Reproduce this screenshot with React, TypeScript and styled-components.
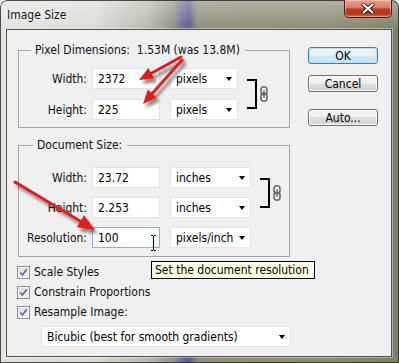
import React from 'react'
import styled, { createGlobalStyle } from 'styled-components'

const GlobalStyle = createGlobalStyle`
  html, body {
    margin: 0;
    padding: 0;
    background: #fff;
  }
  body {
    font-family: "DejaVu Sans Condensed", "DejaVu Sans", sans-serif;
    font-stretch: condensed;
    font-size: 12px;
    color: #000;
  }
`

type Arrow = { x1: number; y1: number; x2: number; y2: number; len: number; w: number }

const arrows: Arrow[] = [
    { x1: 181, y1: 57, x2: 139, y2: 80, len: 14, w: 12 },
    { x1: 182, y1: 60, x2: 143, y2: 104, len: 14, w: 12 },
    { x1: 15, y1: 182, x2: 95, y2: 230, len: 17, w: 14 },
]

const arrowParts = (a: Arrow) => {
    const dx = a.x2 - a.x1
    const dy = a.y2 - a.y1
    const d = Math.hypot(dx, dy)
    const ux = dx / d
    const uy = dy / d
    const bx = a.x2 - ux * a.len
    const by = a.y2 - uy * a.len
    const px = -uy * a.w / 2
    const py = ux * a.w / 2
    return {
        base: { x: bx + ux * 2, y: by + uy * 2 },
        head: `${a.x2},${a.y2} ${bx + px},${by + py} ${bx - px},${by - py}`,
    }
}

const App = () => {
    return (
        <>
            <GlobalStyle />
            <Window>
                <TitleBar>
                    <Title>Image Size</Title>
                    <CloseButton>
                        <svg width="14" height="11" viewBox="0 0 14 11">
                            <path d="M2.5 1.5 L11.5 9.5 M11.5 1.5 L2.5 9.5" stroke="#3a1a14" strokeWidth="4" strokeLinecap="round" />
                            <path d="M2.5 1.5 L11.5 9.5 M11.5 1.5 L2.5 9.5" stroke="#fff" strokeWidth="2.2" strokeLinecap="round" />
                        </svg>
                    </CloseButton>
                </TitleBar>
                <Client>
                    <LeftColumn>
                        <GroupBox $pt={11} $pb={7}>
                            <Legend $indent={12}>Pixel Dimensions:&nbsp; 1.53M (was 13.8M)</Legend>
                            <LinkedGroup>
                                <Rows $gap={10}>
                                    <Row>
                                        <FieldLabel>Width:</FieldLabel>
                                        <TextBox>2372</TextBox>
                                        <Dropdown $w={68}>pixels<Caret /></Dropdown>
                                    </Row>
                                    <Row>
                                        <FieldLabel>Height:</FieldLabel>
                                        <TextBox>225</TextBox>
                                        <Dropdown $w={68}>pixels<Caret /></Dropdown>
                                    </Row>
                                </Rows>
                                <Bracket />
                                <ChainIcon />
                            </LinkedGroup>
                        </GroupBox>

                        <DocGroup $pt={15} $pb={8}>
                            <Legend $indent={14}>Document Size:</Legend>
                            <LinkedGroup>
                                <Rows $gap={9}>
                                    <Row>
                                        <FieldLabel>Width:</FieldLabel>
                                        <TextBox>23.72</TextBox>
                                        <Dropdown $w={81}>inches<Caret /></Dropdown>
                                    </Row>
                                    <Row>
                                        <FieldLabel>Height:</FieldLabel>
                                        <TextBox>2.253</TextBox>
                                        <Dropdown $w={81}>inches<Caret /></Dropdown>
                                    </Row>
                                </Rows>
                                <Bracket />
                                <ChainIcon />
                            </LinkedGroup>
                            <ResolutionRow>
                                <FieldLabel>Resolution:</FieldLabel>
                                <TextBox $focused>
                                    100
                                    <IBeam width="5" height="16" viewBox="0 0 5 16">
                                        <path d="M0 0.5 H2 M3 0.5 H5 M2.5 1 V15 M0 15.5 H2 M3 15.5 H5" stroke="#000" strokeWidth="1" />
                                    </IBeam>
                                    <Tooltip>Set the document resolution</Tooltip>
                                </TextBox>
                                <Dropdown $w={81}>pixels/inch<Caret /></Dropdown>
                            </ResolutionRow>
                        </DocGroup>

                        <Options>
                            {['Scale Styles', 'Constrain Proportions', 'Resample Image:'].map((label) => (
                                <CheckRow key={label}>
                                    <CheckBox>
                                        <svg width="9" height="9" viewBox="0 0 9 9">
                                            <path d="M1.2 4.6 L3.4 7 L7.8 1.4" stroke="#5b6c96" strokeWidth="1.7" fill="none" />
                                        </svg>
                                    </CheckBox>
                                    {label}
                                </CheckRow>
                            ))}
                        </Options>
                        <MethodDropdown $w={250}>Bicubic (best for smooth gradients)<Caret /></MethodDropdown>
                    </LeftColumn>

                    <RightColumn>
                        <PushButton $default>OK</PushButton>
                        <PushButton>Cancel</PushButton>
                        <AutoButton>Auto...</AutoButton>
                    </RightColumn>
                </Client>

                <ArrowLayer width="399" height="363" viewBox="0 0 399 363">
                    <defs>
                        <filter id="arrowShadow" x="-20%" y="-20%" width="140%" height="140%">
                            <feDropShadow dx="3" dy="4" stdDeviation="1.8" floodColor="#000" floodOpacity="0.45" />
                        </filter>
                    </defs>
                    {arrows.map((a, i) => {
                        const p = arrowParts(a)
                        return (
                            <g key={i} filter="url(#arrowShadow)">
                                <line x1={a.x1} y1={a.y1} x2={p.base.x} y2={p.base.y} stroke="#e41c1c" strokeWidth="3" strokeLinecap="round" />
                                <polygon points={p.head} fill="#e41c1c" />
                            </g>
                        )
                    })}
                </ArrowLayer>
            </Window>
        </>
    )
}

const ChainIcon = () => (
    <Chain width="8" height="16" viewBox="0 0 8 16">
        <rect x="1" y="0.8" width="6" height="8" rx="3" fill="none" stroke="#6a6a6a" strokeWidth="1.6" />
        <rect x="1" y="7.2" width="6" height="8" rx="3" fill="none" stroke="#6a6a6a" strokeWidth="1.6" />
        <path d="M4 4 V12" stroke="#6a6a6a" strokeWidth="1.4" />
    </Chain>
)

const Window = styled.div`
    position: relative;
    box-sizing: border-box;
    width: 399px;
    height: 363px;
    padding: 0 7px 6px 6px;
    display: flex;
    flex-direction: column;
    border-radius: 7px 7px 0 0;
    overflow: hidden;
    background:
        linear-gradient(180deg, rgba(255,255,255,0.35) 0%, rgba(255,255,255,0) 30px),
        linear-gradient(90deg, #e4e4e2 0%, #dadad6 24%, #b9b9b1 37%, #929289 43.5%, #6c6e98 45.5%, #5c5f8f 47.5%, #8f8d7a 49.5%, #8e8c73 62%, #8b8b74 84%, #7d7e6b 100%);
    box-shadow: inset 0 0 0 1px rgba(35, 38, 30, 0.8);
`

const TitleBar = styled.div`
    height: 29px;
    flex-shrink: 0;
    display: flex;
    justify-content: space-between;
    align-items: flex-start;
`

const Title = styled.div`
    margin: 8px 0 0 1px;
    line-height: 14px;
    font-size: 12px;
    color: #111;
    text-shadow: 0 0 6px rgba(255, 255, 255, 0.95), 0 0 3px rgba(255, 255, 255, 0.9);
`

const CloseButton = styled.div`
    box-sizing: border-box;
    width: 48px;
    height: 18px;
    border: 1px solid #4f1a10;
    border-top: none;
    border-radius: 0 0 5px 5px;
    background: linear-gradient(180deg, #e7a595 0%, #d97b6b 45%, #c2402b 52%, #b5321f 78%, #d46a3e 100%);
    box-shadow: inset 0 0 0 1px rgba(255, 215, 200, 0.45);
    display: flex;
    align-items: center;
    justify-content: center;
`

const Client = styled.div`
    flex: 1;
    display: flex;
    background: #f0f0f0;
    border: 1px solid #4c5245;
    box-shadow: 0 0 0 1px rgba(255, 255, 255, 0.4);
`

const LeftColumn = styled.div`
    padding: 13px 0 0 11px;
    width: 272px;
    flex-shrink: 0;
`

const RightColumn = styled.div`
    margin-left: 18px;
    padding-top: 17px;
    display: flex;
    flex-direction: column;
`

const GroupBox = styled.fieldset<{ $pt: number; $pb: number }>`
    margin: 0;
    min-width: 0;
    padding: ${(p) => p.$pt}px 0 ${(p) => p.$pb}px 0;
    border: 1px solid #a6a6a6;
`

const DocGroup = styled(GroupBox)`
    margin-top: 10px;
`

const Legend = styled.legend<{ $indent: number }>`
    margin-left: ${(p) => p.$indent}px;
    padding: 0 5px 0 4px;
    line-height: 14px;
    font-size: 12px;
    color: #111;
    white-space: nowrap;
`

const LinkedGroup = styled.div`
    display: flex;
    align-items: center;
`

const Rows = styled.div<{ $gap: number }>`
    display: flex;
    flex-direction: column;
    gap: ${(p) => p.$gap}px;
`

const Row = styled.div`
    display: flex;
    align-items: center;
    height: 21px;
`

const ResolutionRow = styled(Row)`
    margin-top: 9px;
`

const FieldLabel = styled.div`
    width: 68px;
    flex-shrink: 0;
    margin-right: 5px;
    text-align: right;
    white-space: nowrap;
    color: #111;
`

const TextBox = styled.div<{ $focused?: boolean }>`
    position: relative;
    box-sizing: border-box;
    width: 68px;
    height: 21px;
    margin-right: 10px;
    padding-left: 5px;
    display: flex;
    align-items: center;
    background: #fff;
    border: 1px solid ${(p) => (p.$focused ? '#7eb4ea' : '#e3e3e3')};
`

const Dropdown = styled.div<{ $w: number }>`
    box-sizing: border-box;
    width: ${(p) => p.$w}px;
    height: 21px;
    padding: 0 5px 0 5px;
    display: flex;
    align-items: center;
    justify-content: space-between;
    background: #fff;
    border: 1px solid #e6e6e6;
    white-space: nowrap;
`

const MethodDropdown = styled(Dropdown)`
    margin: 4px 0 0 23px;
`

const Caret = styled.span`
    width: 0;
    height: 0;
    border-left: 3.5px solid transparent;
    border-right: 3.5px solid transparent;
    border-top: 4px solid #000;
`

const Bracket = styled.div`
    box-sizing: border-box;
    width: 10px;
    height: 30px;
    margin-left: 9px;
    border: 2px solid #000;
    border-left: none;
`

const Chain = styled.svg`
    margin-left: 3px;
    display: block;
`

const IBeam = styled.svg`
    position: absolute;
    left: 58px;
    top: 7px;
`

const Tooltip = styled.div`
    position: absolute;
    left: 58px;
    top: 33px;
    z-index: 3;
    box-sizing: border-box;
    height: 18px;
    padding: 0 5px 0 3px;
    line-height: 16px;
    white-space: nowrap;
    background: #ffffe1;
    border: 1px solid #000;
    color: #000;
`

const Options = styled.div`
    margin-top: 5px;
`

const CheckRow = styled.div`
    display: flex;
    align-items: center;
    height: 20px;
    color: #111;
`

const CheckBox = styled.span`
    box-sizing: border-box;
    width: 13px;
    height: 13px;
    margin: 0 4px 0 -1px;
    display: flex;
    align-items: center;
    justify-content: center;
    border: 1px solid #8e8f8f;
    background: linear-gradient(135deg, #dcdcdc 0%, #f6f6f6 100%);
    box-shadow: inset 0 0 0 1px #f4f4f4;
`

const PushButton = styled.div<{ $default?: boolean }>`
    box-sizing: border-box;
    width: 70px;
    height: 17px;
    margin-bottom: 11px;
    display: flex;
    align-items: center;
    justify-content: center;
    border-radius: 3px;
    border: 1px solid ${(p) => (p.$default ? '#3c7fb1' : '#707070')};
    background: ${(p) =>
        p.$default
            ? 'linear-gradient(180deg, #f0f8fd 0%, #e3f2fb 50%, #cfe9f8 50%, #c2e2f5 100%)'
            : 'linear-gradient(180deg, #f4f4f4 0%, #ececec 50%, #dedede 50%, #d2d2d2 100%)'};
    box-shadow: inset 0 0 0 1px ${(p) => (p.$default ? '#b9e3fb' : '#fbfbfb')};
    color: #000;
`

const AutoButton = styled(PushButton)`
    margin-top: 6px;
`

const ArrowLayer = styled.svg`
    position: absolute;
    left: 0;
    top: 0;
    z-index: 5;
    pointer-events: none;
`

export default App
